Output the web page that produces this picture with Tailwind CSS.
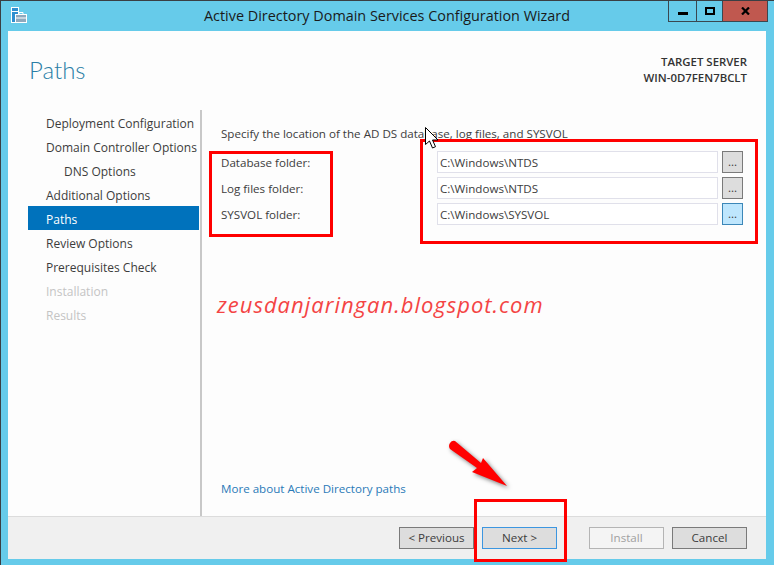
<!DOCTYPE html>
<html lang="en">
<head>
  <meta charset="UTF-8" />
  <title>Active Directory Domain Services Configuration Wizard</title>
  <script src="https://cdn.jsdelivr.net/npm/@tailwindcss/browser@4"></script>
</head>
<body class="relative w-[774px] h-[565px] overflow-hidden bg-[#66cbea] border-t border-l border-[#3a3f44] font-['Open_Sans',sans-serif] text-[11.6px] text-[#3c3c3c]">

  <!-- title bar -->
  <div class="relative flex h-[30px] items-start">
    <svg class="ml-[9px] mt-[6px] h-[17px] w-[17px]" viewBox="0 0 17 17" fill="none" stroke="#fff" stroke-width="1">
      <rect x="1.5" y="0.5" width="7" height="15" fill="#2f8fd0" />
      <path d="M1.5 4.5h7" />
      <rect x="5.5" y="7.5" width="11" height="8" fill="#8fa9bd" />
      <path d="M9 7.5v-2h4v2M5.5 11h11" />
    </svg>
    <div class="absolute left-[203px] top-[6px] whitespace-nowrap text-[14.4px] leading-[18px] text-[#1a1a1a]">Active Directory Domain Services Configuration Wizard</div>
    <div class="ml-auto mr-[6px] flex h-[21px] border border-t-0 border-[#3a4750]">
      <div class="flex w-[28px] items-center justify-center border-r border-[#3a4750]"><div class="mt-[4px] h-[3px] w-[10px] bg-black"></div></div>
      <div class="flex w-[26px] items-center justify-center border-r border-[#3a4750]"><div class="h-[8px] w-[10px] border-2 border-black"></div></div>
      <div class="flex w-[44px] items-center justify-center bg-[#c0584f]">
        <svg class="h-[8px] w-[9px]" viewBox="0 0 9 8" stroke="#000" stroke-width="2.2"><path d="M1 0.5l7 7M8 0.5l-7 7" /></svg>
      </div>
    </div>
  </div>

  <!-- panel -->
  <div class="ml-[7px] flex h-[528px] w-[758px] flex-col bg-[#fdfdfd]">
    <div class="flex h-[79px] justify-between pl-[21px] pr-[19px]">
      <h1 class="mt-[21px] font-['Lato',sans-serif] text-[24px] font-light leading-[36px] text-[#2a7ea6]">Paths</h1>
      <div class="mt-[23px] text-right text-[11.4px] font-semibold leading-[16px] text-[#333]">
        <div>TARGET SERVER</div>
        <div>WIN-0D7FEN7BCLT</div>
      </div>
    </div>

    <div class="flex min-h-0 flex-1">
      <!-- steps -->
      <div class="w-[194px] border-r-2 border-[#c8c8c8] pl-[20px] text-[12px]">
        <div class="mr-px h-[24px] pl-[18px] leading-[28px]">Deployment Configuration</div>
        <div class="mr-px h-[24px] pl-[18px] leading-[28px]">Domain Controller Options</div>
        <div class="mr-px h-[24px] pl-[36px] leading-[28px]">DNS Options</div>
        <div class="mr-px h-[24px] pl-[18px] leading-[28px]">Additional Options</div>
        <div class="mr-px h-[24px] bg-[#0072bc] pl-[18px] leading-[28px] text-white">Paths</div>
        <div class="mr-px h-[24px] pl-[18px] leading-[28px]">Review Options</div>
        <div class="mr-px h-[24px] pl-[18px] leading-[28px]">Prerequisites Check</div>
        <div class="mr-px h-[24px] pl-[18px] leading-[28px] text-[#c4c4c4]">Installation</div>
        <div class="mr-px h-[24px] pl-[18px] leading-[28px] text-[#c4c4c4]">Results</div>
      </div>

      <!-- form -->
      <div class="flex flex-1 flex-col pl-[19px]">
        <p class="mt-[15px] h-[26px] leading-[18px]">Specify the location of the AD DS database, log files, and SYSVOL</p>
        <div class="grid grid-cols-[212px_281px_21px] gap-x-[4px] gap-y-[4px]">
          <div class="h-[22px] leading-[24px]">Database folder:</div>
          <div class="h-[22px] border border-[#e0e0ea] bg-white px-[2px] leading-[22px]">C:\Windows\NTDS</div>
          <div class="flex h-[22px] justify-center border border-[#7a7a7a] bg-[#dddddd] pt-[4px] leading-none">...</div>
          <div class="h-[22px] leading-[24px]">Log files folder:</div>
          <div class="h-[22px] border border-[#e0e0ea] bg-white px-[2px] leading-[22px]">C:\Windows\NTDS</div>
          <div class="flex h-[22px] justify-center border border-[#7a7a7a] bg-[#dddddd] pt-[4px] leading-none">...</div>
          <div class="h-[22px] leading-[24px]">SYSVOL folder:</div>
          <div class="h-[22px] border border-[#e0e0ea] bg-white px-[2px] leading-[22px]">C:\Windows\SYSVOL</div>
          <div class="flex h-[22px] justify-center border border-[#3c87b8] bg-[#bee6fd] pt-[4px] leading-none">...</div>
        </div>
        <div class="mt-[64px] -ml-[4px] whitespace-nowrap text-[22px] font-medium italic leading-[30px] tracking-[1px] text-[#f44444]">zeusdanjaringan.blogspot.com</div>
        <a class="mt-auto mb-[18px] leading-[18px] text-[#2a7ab8]">More about Active Directory paths</a>
      </div>
    </div>

    <!-- buttons -->
    <div class="flex h-[43px] shrink-0 justify-end gap-[8px] border-t border-[#dcdcdc] bg-[#f0f0f0] pr-[19px] pt-[10px]">
      <div class="flex h-[22px] w-[75px] items-center justify-center border border-[#7a7a7a] bg-[#dddddd]">&lt; Previous</div>
      <div class="mr-[24px] flex h-[22px] w-[75px] items-center justify-center border border-[#3c96e0] bg-[#dddddd]">Next &gt;</div>
      <div class="flex h-[22px] w-[75px] items-center justify-center border border-[#b4b4b4] bg-[#f4f4f4] text-[#a0a0a0]">Install</div>
      <div class="flex h-[22px] w-[75px] items-center justify-center border border-[#7a7a7a] bg-[#dddddd]">Cancel</div>
    </div>
  </div>

  <!-- screenshot annotations -->
  <div class="absolute left-[208px] top-[150px] h-[86px] w-[124px] border-[3px] border-[#ff0000]"></div>
  <div class="absolute left-[419px] top-[138px] h-[105px] w-[338px] border-[3px] border-[#ff0000]"></div>
  <div class="absolute left-[473px] top-[498px] h-[63px] w-[93px] border-[3px] border-[#ff0000]"></div>

  <svg class="absolute left-[423px] top-[125px] h-[24px] w-[16px]" viewBox="0 0 16 24">
    <path d="M1.5 1.5v17l4-3.5 3 7 3-1.3-3-6.7h5.5z" fill="#fff" stroke="#000" stroke-width="1" />
  </svg>

  <svg class="absolute left-[444px] top-[437px] h-[56px] w-[70px] drop-shadow-[2px_2px_2px_rgba(0,0,0,0.5)]" viewBox="0 0 70 56">
    <path d="M5 5Q7 2 10 3L36 25L38 20L62 48L27 34L32 30L5 11Q3 8 5 5Z" fill="#ff0000" />
  </svg>
</body>
</html>
